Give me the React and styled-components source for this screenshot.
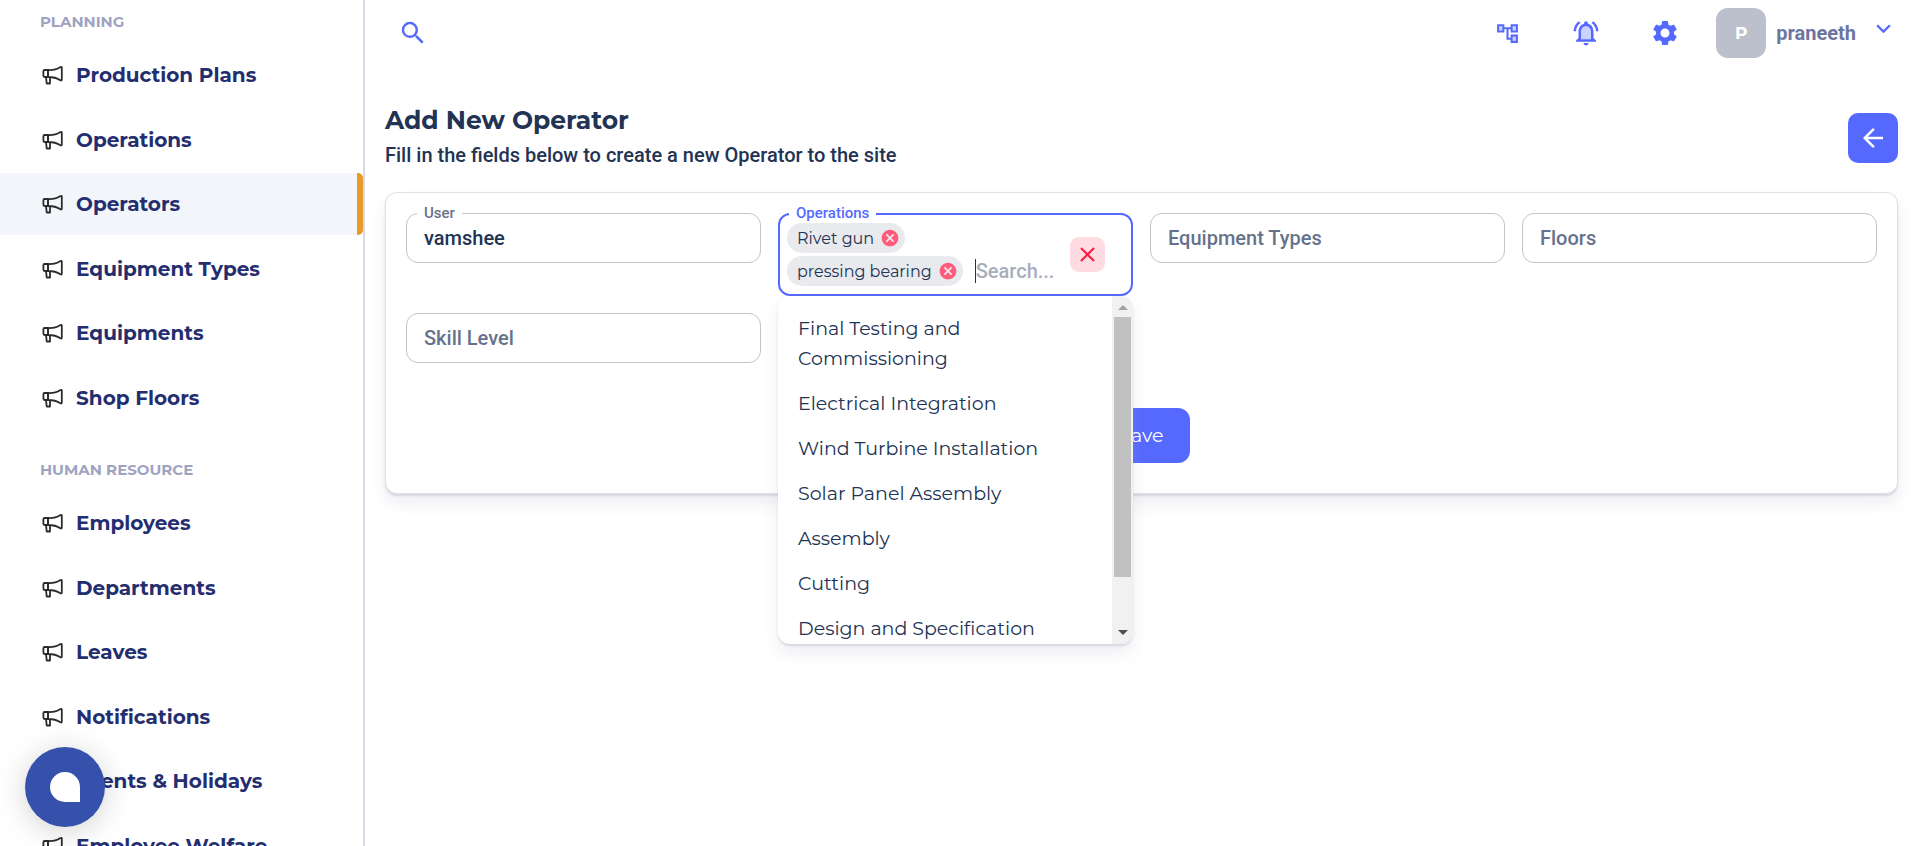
import React from 'react';
import styled, { createGlobalStyle, ThemeProvider } from 'styled-components';
import {
  MdSearch,
  MdSettings,
  MdKeyboardArrowDown,
  MdArrowBack,
  MdCancel,
  MdClose,
} from 'react-icons/md';

const theme = {
  primary: '#5569ff',
  ink: '#223354',
  muted: '#66728c',
  navy: '#242e6f',
  heading: "Montserrat, Inter, sans-serif",
  body: "Roboto, sans-serif",
  shadow: '0 9px 16px rgba(159, 162, 191, 0.18), 0 2px 2px rgba(159, 162, 191, 0.32)',
};

const GlobalStyle = createGlobalStyle`
  * { box-sizing: border-box; }
  html, body, #root { height: 100%; margin: 0; }
  body {
    overflow: hidden;
    background: #fff;
    color: ${theme.ink};
    font-family: ${theme.body};
  }
  button, input { font: inherit; }
`;

const Shell = styled.div`
  display: flex;
  height: 100vh;
  overflow: hidden;
`;

const Sidebar = styled.nav`
  flex: none;
  width: 365px;
  overflow: hidden;
  border-right: 2px solid #dadae6;
  background: #fff;
  font-family: ${(p) => p.theme.heading};
`;

const GroupTitle = styled.h2`
  margin: 0;
  padding: ${(p) => (p.$first ? '12px' : '29px')} 40px 12px;
  font-size: 15px;
  line-height: 20px;
  font-weight: 700;
  color: #9ea3c2;
  text-transform: uppercase;
`;

const NavList = styled.ul`
  margin: 0;
  padding: 0;
  list-style: none;
`;

const NavItem = styled.li`
  margin-bottom: 3px;

  &:nth-child(even) { margin-bottom: 2px; }
`;

const NavLink = styled.a`
  display: flex;
  align-items: center;
  gap: 13px;
  height: 62px;
  padding-left: 42px;
  border-right: 6px solid ${(p) => (p.$active ? '#eb9a28' : 'transparent')};
  border-radius: 0 5px 5px 0;
  background: ${(p) => (p.$active ? '#f2f5fa' : 'transparent')};
  color: ${(p) => p.theme.navy};
  font-size: 20px;
  font-weight: 700;
  text-decoration: none;
  white-space: nowrap;

  svg { flex: none; color: #2b2b2b; }
`;

const Main = styled.main`
  flex: 1;
  min-width: 0;
  padding: 8px 22px 0 20px;
`;

const TopBar = styled.header`
  display: flex;
  align-items: center;
  justify-content: space-between;
  height: 50px;
  padding-left: 13px;
`;

const IconButton = styled.button`
  display: flex;
  align-items: center;
  justify-content: center;
  padding: 0;
  border: 0;
  background: none;
  color: ${(p) => p.theme.primary};
`;

const ToolButton = styled(IconButton)`
  width: 30px;
  height: 30px;
`;

const Tools = styled.div`
  display: flex;
  align-items: center;
  gap: 49px;
`;

const Account = styled.button`
  display: flex;
  align-items: center;
  gap: 10px;
  margin-left: -13px;
  padding: 0;
  border: 0;
  background: none;
  color: #6e759f;
  font-size: 20px;
  font-weight: 700;

  > svg { align-self: flex-start; margin: 6px 0 0 3px; color: ${(p) => p.theme.primary}; }
`;

const Avatar = styled.span`
  display: flex;
  align-items: center;
  justify-content: center;
  width: 50px;
  height: 50px;
  border-radius: 12px;
  background: #bcc0cc;
  color: #fff;
  font: 700 17px ${(p) => p.theme.heading};
`;

const PageHead = styled.div`
  display: flex;
  align-items: flex-end;
  justify-content: space-between;
  padding: 46px 0 22px;
`;

const Title = styled.h1`
  margin: 0 0 4px;
  font: 700 25px/32px ${(p) => p.theme.heading};
`;

const Subtitle = styled.p`
  margin: 0;
  font-size: 20px;
  line-height: 30px;
  font-weight: 500;
`;

const BackButton = styled(IconButton)`
  width: 50px;
  height: 50px;
  margin-bottom: 7px;
  border-radius: 10px;
  background: ${(p) => p.theme.primary};
  color: #fff;
`;

const Card = styled.form`
  padding: 20px 20px 30px;
  border: 1px solid #e0e0e4;
  border-radius: 12px;
  background: #fff;
  box-shadow: ${(p) => p.theme.shadow};
`;

const Fields = styled.div`
  display: grid;
  grid-template-columns: repeat(4, 1fr);
  align-items: start;
  gap: 17px;
`;

const Field = styled.div`
  position: relative;
`;

const Label = styled.label`
  position: absolute;
  top: -9px;
  left: 11px;
  padding: 0 7px;
  background: linear-gradient(#fff, #fff) 0 9px / 100% 2px no-repeat;
  color: ${(p) => (p.$focused ? p.theme.primary : p.theme.muted)};
  font-size: 15px;
  line-height: 18px;
  font-weight: 500;
`;

const TextInput = styled.input`
  display: block;
  width: 100%;
  height: 50px;
  padding: 0 17px;
  border: 1px solid #c4c4c8;
  border-radius: 12px;
  outline: 0;
  background: transparent;
  color: ${(p) => p.theme.ink};
  font-size: 20px;
  font-weight: 500;

  &::placeholder { color: ${(p) => p.theme.muted}; opacity: 1; }
`;

const TagBox = styled.div`
  display: flex;
  align-items: center;
  justify-content: space-between;
  height: 83px;
  padding: 0 26px 0 7px;
  border: 2px solid ${(p) => p.theme.primary};
  border-radius: 12px;
`;

const Tags = styled.div`
  display: flex;
  flex: 1;
  flex-wrap: wrap;
  align-items: center;
  gap: 3px 12px;
`;

const Tag = styled.span`
  display: flex;
  align-items: center;
  gap: 6px;
  height: 30px;
  padding: 0 5px 0 10px;
  border-radius: 15px;
  background: #e8eaee;
  font: 400 16px ${(p) => p.theme.heading};

  button { color: #ff5c7c; }
`;

const SearchInput = styled.input`
  width: 82px;
  height: 24px;
  padding: 0;
  border: 0;
  border-left: 1px solid ${(p) => p.theme.ink};
  outline: 0;
  background: transparent;
  font-size: 20px;
  font-weight: 500;

  &::placeholder { color: #a7adba; opacity: 1; }
`;

const ClearButton = styled(IconButton)`
  flex: none;
  width: 35px;
  height: 35px;
  border-radius: 9px;
  background: #ffdce2;
  color: #ff1943;
`;

const Menu = styled.div`
  position: absolute;
  z-index: 2;
  top: 100%;
  left: 0;
  right: 0;
  display: flex;
  height: 348px;
  overflow: hidden;
  border-radius: 12px;
  background: #fff;
  box-shadow: ${(p) => p.theme.shadow};
`;

const Options = styled.ul`
  flex: 1;
  margin: 0;
  padding: 10px 0;
  overflow: hidden;
  list-style: none;
`;

const Option = styled.li`
  padding: 8px 20px 7px;
  font: 400 19px/30px ${(p) => p.theme.heading};
`;

const ScrollTrack = styled.div`
  display: flex;
  flex-direction: column;
  align-items: center;
  justify-content: space-between;
  width: 21px;
  padding: 9px 2px;
  background: #f1f1f1;
`;

const ScrollThumb = styled.div`
  width: 17px;
  height: 260px;
  margin: 7px 0 auto;
  background: #c1c1c1;
`;

const Actions = styled.div`
  display: flex;
  justify-content: center;
  padding-top: 45px;
`;

const SaveButton = styled.button`
  height: 55px;
  padding: 0 26px;
  border: 0;
  border-radius: 12px;
  background: ${(p) => p.theme.primary};
  color: #fff;
  font: 400 19px ${(p) => p.theme.heading};
`;

const ChatButton = styled.button`
  position: fixed;
  z-index: 3;
  left: 25px;
  bottom: 19px;
  display: flex;
  align-items: center;
  justify-content: center;
  width: 80px;
  height: 80px;
  border: 0;
  border-radius: 50%;
  background: #3551ab;
  box-shadow: 0 4px 30px rgba(0, 0, 0, 0.18);
`;

const ChatMark = styled.span`
  width: 30px;
  height: 30px;
  border-radius: 50% 50% 0 50%;
  background: #fff;
`;

const MegaphoneIcon = () => (
  <svg
    width="21"
    height="21"
    viewBox="0 0 21 21"
    fill="none"
    stroke="currentColor"
    strokeWidth="1.8"
    strokeLinejoin="round"
    aria-hidden="true"
  >
    <path d="M6 5H2.6Q1.400 5 1.400 6.300V10.600Q1.400 12 2.600 12H6Z" />
    <path d="M6 5Q13.500 5.300 18 2.300Q19.800 1.200 19.800 2.600V14.800Q19.800 16 18.400 15.200Q13.500 12 6 12Z" />
    <path d="M4 12.200L4.700 18.500H8V12.200" />
  </svg>
);

const TreeIcon = () => (
  <svg width="25" height="25" viewBox="0 0 24 24" fill="currentColor" aria-hidden="true">
    <path opacity=".3" d="M20 9h-3V5h3v4zM7 9H4V5h3v4zM17 15h3v4h-3z" />
    <path d="M22 11V3h-7v3H9V3H2v8h7V8h2v10h4v3h7v-8h-7v3h-2V8h2v3h7zM7 9H4V5h3v4zm10 6h3v4h-3v-4zm0-10h3v4h-3V5z" />
  </svg>
);

const BellIcon = () => (
  <svg width="30" height="30" viewBox="0 0 24 24" fill="currentColor" aria-hidden="true">
    <path opacity=".3" d="M12 6.5c-2.49 0-4 2.02-4 4.5v6h8v-6c0-2.48-1.51-4.5-4-4.5z" />
    <path d="M18 16v-5c0-3.07-1.63-5.64-4.5-6.32V4c0-.83-.67-1.5-1.5-1.5s-1.5.67-1.5 1.5v.68C7.64 5.36 6 7.92 6 11v5l-2 2v1h16v-1l-2-2zm-2 1H8v-6c0-2.48 1.51-4.5 4-4.5s4 2.02 4 4.5v6zM7.58 4.08L6.15 2.65C3.75 4.48 2.17 7.3 2.03 10.5h2a8.445 8.445 0 0 1 3.55-6.42zM19.97 10.5h2c-.15-3.2-1.73-6.02-4.12-7.85l-1.42 1.43a8.495 8.495 0 0 1 3.54 6.42zM12 22c1.1 0 2-.9 2-2h-4c0 1.1.9 2 2 2z" />
  </svg>
);

const ScrollArrow = ({ down }) => (
  <svg width="10" height="5" viewBox="0 0 10 5" aria-hidden="true">
    <path d={down ? 'M0 0h10L5 5z' : 'M0 5h10L5 0z'} fill={down ? '#505050' : '#a3a3a3'} />
  </svg>
);

const groups = [
  {
    title: 'Planning',
    items: ['Production Plans', 'Operations', 'Operators', 'Equipment Types', 'Equipments', 'Shop Floors'],
  },
  {
    title: 'Human Resource',
    items: ['Employees', 'Departments', 'Leaves', 'Notifications', 'Events & Holidays', 'Employee Welfare'],
  },
];

const selected = ['Rivet gun', 'pressing bearing'];

const options = [
  'Final Testing and Commissioning',
  'Electrical Integration',
  'Wind Turbine Installation',
  'Solar Panel Assembly',
  'Assembly',
  'Cutting',
  'Design and Specification',
];

export default function App() {
  return (
    <ThemeProvider theme={theme}>
      <GlobalStyle />
      <Shell>
        <Sidebar>
          {groups.map((group, i) => (
            <section key={group.title}>
              <GroupTitle $first={i === 0}>{group.title}</GroupTitle>
              <NavList>
                {group.items.map((item) => (
                  <NavItem key={item}>
                    <NavLink href="#" $active={item === 'Operators'}>
                      <MegaphoneIcon />
                      {item}
                    </NavLink>
                  </NavItem>
                ))}
              </NavList>
            </section>
          ))}
        </Sidebar>

        <Main>
          <TopBar>
            <IconButton aria-label="Search"><MdSearch size={30} /></IconButton>
            <Tools>
              <ToolButton aria-label="Organisation"><TreeIcon /></ToolButton>
              <ToolButton aria-label="Notifications"><BellIcon /></ToolButton>
              <ToolButton aria-label="Settings"><MdSettings size={30} /></ToolButton>
              <Account>
                <Avatar>P</Avatar>
                praneeth
                <MdKeyboardArrowDown size={29} />
              </Account>
            </Tools>
          </TopBar>

          <PageHead>
            <div>
              <Title>Add New Operator</Title>
              <Subtitle>Fill in the fields below to create a new Operator to the site</Subtitle>
            </div>
            <BackButton aria-label="Back"><MdArrowBack size={30} /></BackButton>
          </PageHead>

          <Card>
            <Fields>
              <Field>
                <TextInput id="user" defaultValue="vamshee" />
                <Label htmlFor="user">User</Label>
              </Field>
              <Field>
                <TagBox>
                  <Tags>
                    {selected.map((tag) => (
                      <Tag key={tag}>
                        {tag}
                        <IconButton type="button" aria-label={`Remove ${tag}`}><MdCancel size={20} /></IconButton>
                      </Tag>
                    ))}
                    <SearchInput id="operations" placeholder="Search..." />
                  </Tags>
                  <ClearButton type="button" aria-label="Clear"><MdClose size={25} /></ClearButton>
                </TagBox>
                <Label htmlFor="operations" $focused>Operations</Label>
                <Menu>
                  <Options role="listbox">
                    {options.map((option) => (
                      <Option key={option} role="option">{option}</Option>
                    ))}
                  </Options>
                  <ScrollTrack>
                    <ScrollArrow />
                    <ScrollThumb />
                    <ScrollArrow down />
                  </ScrollTrack>
                </Menu>
              </Field>
              <Field><TextInput aria-label="Equipment Types" placeholder="Equipment Types" /></Field>
              <Field><TextInput aria-label="Floors" placeholder="Floors" /></Field>
              <Field><TextInput aria-label="Skill Level" placeholder="Skill Level" /></Field>
            </Fields>
            <Actions><SaveButton type="button">Save</SaveButton></Actions>
          </Card>
        </Main>
      </Shell>
      <ChatButton aria-label="Open chat"><ChatMark /></ChatButton>
    </ThemeProvider>
  );
}
